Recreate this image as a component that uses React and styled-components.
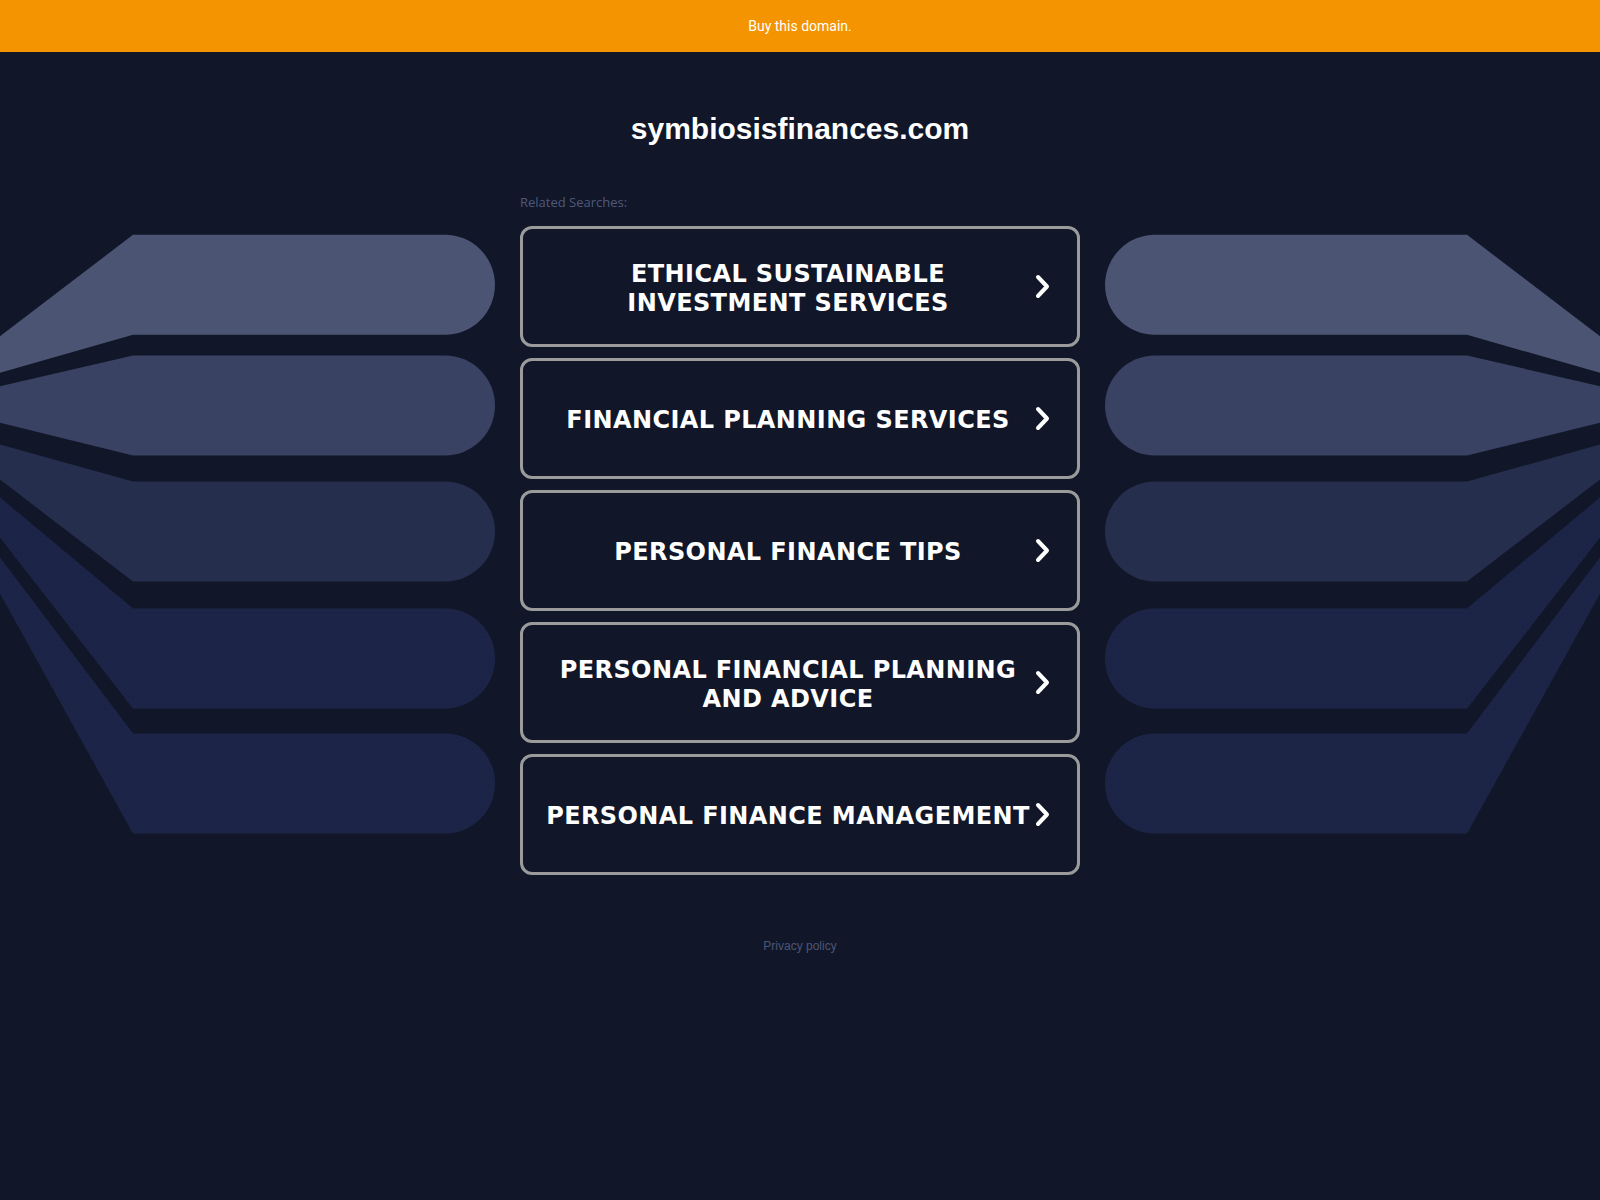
import styled, { createGlobalStyle } from "styled-components";

const GlobalStyle = createGlobalStyle`
  html, body {
    margin: 0;
    padding: 0;
    background: #111729;
  }
  body {
    min-height: 1200px;
    font-family: "Liberation Sans", Arial, sans-serif;
  }
`;

const searches = [
  "Ethical Sustainable Investment Services",
  "Financial Planning Services",
  "Personal Finance Tips",
  "Personal Financial Planning and Advice",
  "Personal Finance Management",
];

// fan shapes, page coords (y), left side. right side is the mirror
const shapes = [
  { top: 235.3, a: 336.7, b: 373.3, fill: "#4b5573" },
  { top: 356, a: 386.7, b: 423.3, fill: "#394262" },
  { top: 482, a: 445, b: 480, fill: "#252e4d" },
  { top: 609, a: 498, b: 538, dots: true },
  { top: 734, a: 558, b: 594, dots: true },
];

function Fan({ side }) {
  const id = `dots-${side}`;
  return (
    <FanSvg $flip={side === "right"} viewBox="0 226.5 495 649">
      <defs>
        <pattern id={id} width="4" height="4" patternUnits="userSpaceOnUse">
          <rect width="4" height="4" fill="#1c2547" />
          <rect x="1" y="1" width="1" height="1" fill="#16203c" />
        </pattern>
      </defs>
      {shapes.map((s) => (
        <path
          key={s.top}
          d={`M0 ${s.a} L133 ${s.top} H445 A50 50 0 0 1 445 ${s.top + 100} H133 L0 ${s.b} Z`}
          fill={s.dots ? `url(#${id})` : s.fill}
        />
      ))}
    </FanSvg>
  );
}

function Chevron() {
  return (
    <ChevronSvg viewBox="0 0 15 25">
      <polyline
        points="3,3 12,12.5 3,22"
        fill="none"
        stroke="#fff"
        strokeWidth="4"
        strokeLinecap="round"
        strokeLinejoin="round"
      />
    </ChevronSvg>
  );
}

export default function App() {
  return (
    <>
      <GlobalStyle />
      <TopBar href="#">Buy this domain.</TopBar>
      <Title>symbiosisfinances.com</Title>
      <Label>Related Searches:</Label>
      <Row>
        <Fan side="left" />
        <CardList>
          {searches.map((s) => (
            <Card href="#" key={s}>
              <CardText>{s}</CardText>
              <Chevron />
            </Card>
          ))}
        </CardList>
        <Fan side="right" />
      </Row>
      <Footer>
        <FooterLink href="#">Privacy policy</FooterLink>
      </Footer>
    </>
  );
}

const TopBar = styled.a`
  display: block;
  height: 52px;
  line-height: 52px;
  background: #f39400;
  color: #fff;
  text-align: center;
  font-family: Roboto, "Liberation Sans", sans-serif;
  font-size: 14px;
  text-decoration: none;
`;

const Title = styled.h1`
  margin: 59px 0 0;
  text-align: center;
  color: #fff;
  font-family: "Liberation Sans", Arial, sans-serif;
  font-weight: bold;
  font-size: 30px;
  line-height: 36px;
`;

const Label = styled.div`
  width: 560px;
  margin: 47px auto 0;
  color: #50597a;
  font-family: "Open Sans", sans-serif;
  font-size: 13px;
  line-height: 16px;
`;

const Row = styled.div`
  display: grid;
  grid-template-columns: 1fr 560px 1fr;
  column-gap: 25px;
  margin-top: 16px;
`;

const FanSvg = styled.svg`
  display: block;
  width: 100%;
  height: 649px;
  transform: ${(p) => (p.$flip ? "scaleX(-1)" : "none")};
`;

const CardList = styled.div`
  display: flex;
  flex-direction: column;
  gap: 11px;
`;

const Card = styled.a`
  box-sizing: border-box;
  height: 121px;
  display: flex;
  align-items: center;
  padding: 0 27px 0 18px;
  border: 3px solid #9b9b9b;
  border-radius: 12px;
  text-decoration: none;
`;

const CardText = styled.span`
  flex: 1;
  padding-top: 4px;
  text-align: center;
  color: #fff;
  font-family: "DejaVu Sans", Verdana, sans-serif;
  font-weight: bold;
  font-size: 24px;
  letter-spacing: 0.4px;
  line-height: 29px;
  text-transform: uppercase;
`;

const ChevronSvg = styled.svg`
  flex-shrink: 0;
  width: 15px;
  height: 25px;
`;

const Footer = styled.div`
  margin-top: 63px;
  text-align: center;
  line-height: 14px;
`;

const FooterLink = styled.a`
  color: #4d5575;
  font-family: "Liberation Sans", Arial, sans-serif;
  font-size: 12px;
  text-decoration: none;
`;
